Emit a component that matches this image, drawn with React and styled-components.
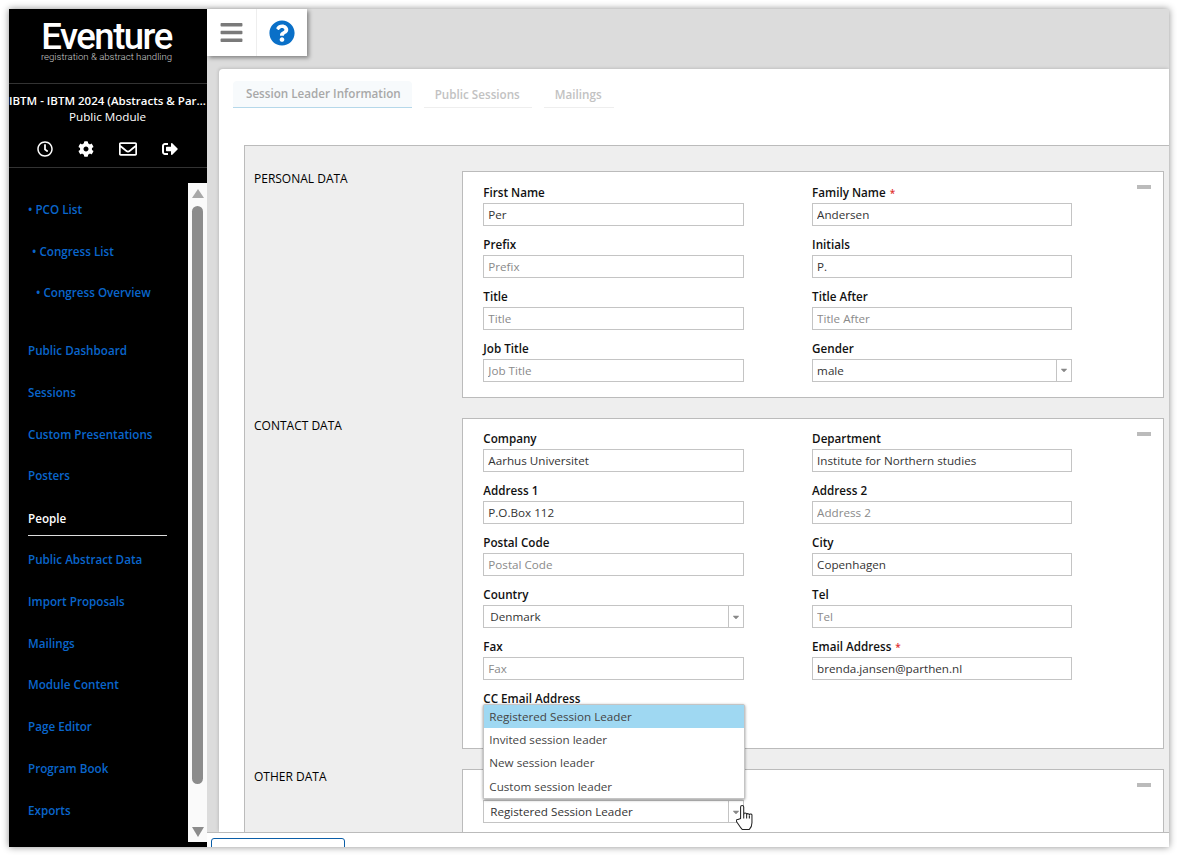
import React from "react";
import styled, { createGlobalStyle } from "styled-components";
import { FaBars, FaQuestionCircle, FaRegClock, FaCog, FaRegEnvelope, FaSignOutAlt, FaCaretDown } from "react-icons/fa";

const Global = createGlobalStyle`
  html, body { margin: 0; padding: 0; background: #fff; }
  body { font-family: "Open Sans", "Liberation Sans", sans-serif; font-size: 11.67px; color: #111; }
  * { box-sizing: border-box; }
`;

const Page = styled.div`
  width: 1177px;
  height: 855px;
  padding: 9px 8px 8px 9px;
  overflow: hidden;
`;
const Window = styled.div`
  display: flex;
  width: 1160px;
  height: 838px;
  box-shadow: 0 0 7px rgba(0, 0, 0, 0.45);
`;
const Sidebar = styled.aside`
  width: 198px;
  flex: none;
  display: flex;
  flex-direction: column;
  background: #000;
  color: #fff;
`;
const Brand = styled.div`
  height: 75px;
  flex: none;
  border-bottom: 1px solid #333;
  display: flex;
  flex-direction: column;
  align-items: center;
  padding: 13px 3px 0 0;
`;
const LogoName = styled.div`
  font-family: Roboto, sans-serif;
  font-size: 36.5px;
  font-weight: 500;
  line-height: 30px;
  letter-spacing: -1.5px;
  color: #fff;
`;
const LogoTag = styled.div`
  font-family: Roboto, sans-serif;
  font-size: 9.6px;
  font-weight: 300;
  line-height: 10px;
  color: #ccc;
`;
const Context = styled.div`
  height: 84px;
  flex: none;
  border-bottom: 1px solid #333;
  text-align: center;
  padding-top: 8px;
`;
const ContextTitle = styled.div`
  font-size: 11.5px;
  font-weight: 600;
  line-height: 17px;
  white-space: nowrap;
  overflow: hidden;
  text-overflow: ellipsis;
`;
const ContextSub = styled.div`
  font-size: 11.67px;
  line-height: 15px;
  padding-right: 1px;
`;
const IconRow = styled.div`
  display: flex;
  justify-content: center;
  align-items: center;
  gap: 25px;
  margin-top: 17px;
  padding-right: 1px;
  height: 16px;
  font-size: 16px;
  svg { display: block; }
`;
const NavArea = styled.div`
  flex: 1;
  min-height: 0;
  display: flex;
  padding-bottom: 5px;
`;
const NavList = styled.nav`
  flex: 1;
  padding: 20.5px 21px 0 19px;
`;
const NavGroup = styled.div`
  margin-bottom: 15.8px;
`;
const NavItem = styled.a`
  display: flex;
  align-items: center;
  height: 41.8px;
  padding-left: ${(p) => p.$indent || 0}px;
  font-size: 11.67px;
  font-weight: 600;
  color: ${(p) => (p.$active ? "#fff" : "#0a66cc")};
  ${(p) => p.$active && "border-bottom: 1px solid #ddd; height: 36px; margin: 3px 0 2.8px; padding-top: 3px;"}
`;
const ScrollTrack = styled.div`
  width: 19px;
  flex: none;
  margin-top: 15px;
  background: #fafafa;
  display: flex;
  flex-direction: column;
  align-items: center;
  padding: 6px 0 5px;
`;
const ScrollArrow = styled.span`
  flex: none;
  width: 0;
  height: 0;
  border-left: 6px solid transparent;
  border-right: 6px solid transparent;
  ${(p) => (p.$down ? "border-top: 10px solid #8c8c8c;" : "border-bottom: 9px solid #a8a8a8;")}
`;
const ScrollThumb = styled.div`
  flex: 1;
  width: 11px;
  margin: 8px 0 43px;
  background: #8c8c8c;
  border-radius: 6px;
`;
const Main = styled.main`
  flex: 1;
  min-width: 0;
  display: flex;
  flex-direction: column;
  background: #dcdcdc;
`;
const TopBar = styled.div`
  height: 60px;
  flex: none;
`;
const Toolbar = styled.div`
  display: flex;
  width: 100px;
  height: 47px;
  background: #fff;
  box-shadow: 2px 2px 4px rgba(0, 0, 0, 0.4);
`;
const ToolButton = styled.div`
  width: ${(p) => p.$width}px;
  flex: none;
  display: flex;
  align-items: center;
  justify-content: center;
  color: ${(p) => p.$color};
  font-size: ${(p) => p.$size}px;
  & + & { border-left: 1px solid #eee; }
  svg { display: block; }
`;
const Middle = styled.div`
  flex: 1;
  min-height: 0;
  padding-left: 12px;
  display: flex;
`;
const Card = styled.div`
  flex: 1;
  min-width: 0;
  background: #fff;
  border-radius: 4px 0 0 0;
  box-shadow: -1px -1px 3px rgba(0, 0, 0, 0.12);
  overflow: hidden;
  padding: 12px 0 0 14px;
`;
const Tabs = styled.div`
  display: flex;
  gap: 12px;
  height: 27px;
`;
const Tab = styled.div`
  padding: ${(p) => (p.$active ? "5px 11px 0 13px" : "6px 12px 0 11px")};
  font-size: 11.67px;
  font-weight: 600;
  background: ${(p) => (p.$active ? "#f7fafc" : "#fff")};
  border-bottom: 1px solid ${(p) => (p.$active ? "#b5d8ea" : "#eee")};
  border-radius: 4px 4px 0 0;
  color: ${(p) => (p.$active ? "#a8a8a8" : "#c2c2c2")};
`;
const Panel = styled.div`
  width: 940px;
  margin: 37px 0 0 11px;
  background: #eee;
  border: 1px solid #bbb;
  padding: 25px 0 0 9px;
`;
const Section = styled.section`
  display: flex;
  margin-bottom: 20px;
`;
const SectionTitle = styled.h3`
  margin: 0;
  width: 208px;
  flex: none;
  font-size: 12px;
  font-weight: 500;
  line-height: 16px;
  color: #000;
  text-transform: uppercase;
`;
const Fieldset = styled.div`
  position: relative;
  width: 702px;
  flex: none;
  background: #fff;
  border: 1px solid #bbb;
  padding: ${(p) => (p.$offset ? "11.5px 0 15.5px 20.3px" : "11px 0 16px 20.3px")};
  display: grid;
  grid-template-columns: 328.8px 328.8px;
  row-gap: 10px;
`;
const Collapse = styled.span`
  position: absolute;
  top: 13px;
  right: 12px;
  width: 14px;
  height: 4px;
  background: #bbb;
`;
const Field = styled.div`
  position: relative;
  width: 260.3px;
`;
const Label = styled.label`
  display: block;
  height: 17px;
  margin-bottom: 2px;
  font-size: 11.67px;
  font-weight: 600;
  line-height: 17px;
  color: #111;
`;
const Star = styled.span`
  color: #e03030;
  margin-left: 4px;
  font-size: 10px;
`;
const TextInput = styled.input`
  display: block;
  width: 100%;
  height: 23px;
  border: 1px solid #c4c4c4;
  border-radius: 0;
  padding: 0 4px;
  outline: none;
  background: #fff;
  font: 400 11.67px "Open Sans", sans-serif;
  color: #333;
  &::placeholder { color: #8a8a8a; opacity: 1; }
`;
const SelectBox = styled.div`
  display: flex;
  height: 23px;
  border: 1px solid #c4c4c4;
  background: #fff;
  font-size: 11.67px;
  line-height: 21px;
  color: #333;
`;
const SelectValue = styled.span`
  flex: 1;
  padding-left: ${(p) => p.$pad}px;
`;
const SelectCaret = styled.span`
  width: 15px;
  flex: none;
  border-left: 1px solid #c4c4c4;
  display: flex;
  align-items: center;
  justify-content: center;
  color: #888;
  font-size: 10px;
  svg { display: block; }
`;
const Menu = styled.ul`
  position: absolute;
  left: 0;
  right: -1px;
  bottom: 24px;
  margin: 0;
  padding: 0;
  list-style: none;
  background: #fff;
  border: 1px solid #c4c4c4;
  border-radius: 2px;
  box-shadow: 0 1px 3px rgba(0, 0, 0, 0.45);
`;
const MenuItem = styled.li`
  height: 23.3px;
  padding-left: 5px;
  font-size: 11.67px;
  line-height: 23px;
  color: #444;
  background: ${(p) => (p.$selected ? "#9fd8f2" : "#fff")};
`;
const Hand = styled.svg`
  position: absolute;
  left: 253px;
  top: 24px;
`;
const BottomBar = styled.div`
  height: 15px;
  flex: none;
  background: #fff;
  border-top: 1px solid #bbb;
  padding: 5px 0 0 4px;
  overflow: hidden;
`;
const BottomButton = styled.div`
  width: 134px;
  height: 20px;
  border: 1px solid #0a5ea8;
  border-radius: 3px;
`;

const nested = [["• PCO List", 0], ["• Congress List", 4], ["• Congress Overview", 8]];
const menu = ["Public Dashboard", "Sessions", "Custom Presentations", "Posters", "People", "Public Abstract Data", "Import Proposals", "Mailings", "Module Content", "Page Editor", "Program Book", "Exports"];

const personal = [
  { label: "First Name", value: "Per" },
  { label: "Family Name", value: "Andersen", required: true },
  { label: "Prefix" },
  { label: "Initials", value: "P." },
  { label: "Title" },
  { label: "Title After" },
  { label: "Job Title" },
  { label: "Gender", value: "male", select: true, pad: 4 },
];
const contact = [
  { label: "Company", value: "Aarhus Universitet" },
  { label: "Department", value: "Institute for Northern studies" },
  { label: "Address 1", value: "P.O.Box 112" },
  { label: "Address 2" },
  { label: "Postal Code" },
  { label: "City", value: "Copenhagen" },
  { label: "Country", value: "Denmark", select: true, pad: 6 },
  { label: "Tel" },
  { label: "Fax" },
  { label: "Email Address", value: "brenda.jansen@parthen.nl", required: true },
  { label: "CC Email Address" },
];
const options = ["Registered Session Leader", "Invited session leader", "New session leader", "Custom session leader"];

function FormField({ label, value, required, select, pad }) {
  return (
    <Field>
      <Label>{label}{required && <Star>*</Star>}</Label>
      {select ? (
        <SelectBox>
          <SelectValue $pad={pad}>{value}</SelectValue>
          <SelectCaret><FaCaretDown /></SelectCaret>
        </SelectBox>
      ) : (
        <TextInput readOnly value={value || ""} placeholder={label} />
      )}
    </Field>
  );
}

export default function App() {
  return (
    <Page>
      <Global />
      <Window>
        <Sidebar>
          <Brand>
            <LogoName>Eventure</LogoName>
            <LogoTag>registration &amp; abstract handling</LogoTag>
          </Brand>
          <Context>
            <ContextTitle>IBTM - IBTM 2024 (Abstracts &amp; Participants)</ContextTitle>
            <ContextSub>Public Module</ContextSub>
            <IconRow>
              <FaRegClock />
              <FaCog />
              <FaRegEnvelope size={18} />
              <FaSignOutAlt />
            </IconRow>
          </Context>
          <NavArea>
            <NavList>
              <NavGroup>
                {nested.map(([t, i]) => <NavItem key={t} $indent={i}>{t}</NavItem>)}
              </NavGroup>
              {menu.map((t) => <NavItem key={t} $active={t === "People"}>{t}</NavItem>)}
            </NavList>
            <ScrollTrack>
              <ScrollArrow />
              <ScrollThumb />
              <ScrollArrow $down />
            </ScrollTrack>
          </NavArea>
        </Sidebar>
        <Main>
          <TopBar>
            <Toolbar>
              <ToolButton $width={49} $color="#7a7a7a" $size={25}><FaBars /></ToolButton>
              <ToolButton $width={51} $color="#0a70c8" $size={26}><FaQuestionCircle /></ToolButton>
            </Toolbar>
          </TopBar>
          <Middle>
            <Card>
              <Tabs>
                <Tab $active>Session Leader Information</Tab>
                <Tab>Public Sessions</Tab>
                <Tab>Mailings</Tab>
              </Tabs>
              <Panel>
                <Section>
                  <SectionTitle>Personal Data</SectionTitle>
                  <Fieldset $offset>
                    <Collapse />
                    {personal.map((f) => <FormField key={f.label} {...f} />)}
                  </Fieldset>
                </Section>
                <Section>
                  <SectionTitle>Contact Data</SectionTitle>
                  <Fieldset>
                    <Collapse />
                    {contact.map((f) => <FormField key={f.label} {...f} />)}
                  </Fieldset>
                </Section>
                <Section>
                  <SectionTitle>Other Data</SectionTitle>
                  <Fieldset>
                    <Collapse />
                    <Field>
                      <Label>Type</Label>
                      <SelectBox>
                        <SelectValue $pad={6}>Registered Session Leader</SelectValue>
                        <SelectCaret><FaCaretDown /></SelectCaret>
                      </SelectBox>
                      <Menu>
                        {options.map((o, i) => <MenuItem key={o} $selected={i === 0}>{o}</MenuItem>)}
                      </Menu>
                      <Hand width="17" height="25" viewBox="1.5 1 15.5 24" fill="#fff" stroke="#222" strokeWidth="1" strokeLinejoin="round">
                        <path d="M5.5 14 V3 a1.5 1.5 0 0 1 3 0 V10 a1.4 1.4 0 0 1 2.8 0 a1.4 1.4 0 0 1 2.6 .5 a1.3 1.3 0 0 1 2.5 .7 V18 c0 3 -1.5 5.5 -2.5 6.5 H7 c-1.5 -1.5 -3 -4 -5 -7 c-1 -1.5 -.5 -3 1 -2.5 z" />
                        <path d="M8.5 10 v4 M11.3 10.5 v3.5 M13.9 11 v3" fill="none" />
                      </Hand>
                    </Field>
                  </Fieldset>
                </Section>
              </Panel>
            </Card>
          </Middle>
          <BottomBar>
            <BottomButton />
          </BottomBar>
        </Main>
      </Window>
    </Page>
  );
}
